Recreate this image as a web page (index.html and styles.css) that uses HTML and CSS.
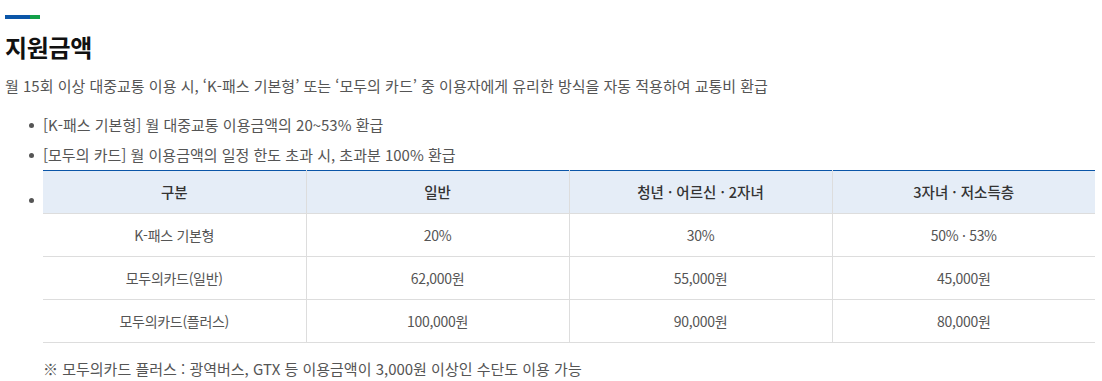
FILE: index.html
```html
<!DOCTYPE html>
<html lang="ko">
<head>
<meta charset="utf-8">
<title>지원금액</title>
<link rel="stylesheet" href="styles.css">
</head>
<body>
<section class="wrap">
  <div class="bar"></div>
  <h2 class="title">지원금액</h2>
  <p class="desc">월 15회 이상 대중교통 이용 시, ‘K-패스 기본형’ 또는 ‘모두의 카드’ 중 이용자에게 유리한 방식을 자동 적용하여 교통비 환급</p>
  <ul class="list">
    <li>[K-패스 기본형] 월 대중교통 이용금액의 20~53% 환급</li>
    <li>[모두의 카드] 월 이용금액의 일정 한도 초과 시, 초과분 100% 환급</li>
    <li class="table-item">
      <table class="tbl">
        <thead>
          <tr><th>구분</th><th>일반</th><th>청년 · 어르신 · 2자녀</th><th>3자녀 · 저소득층</th></tr>
        </thead>
        <tbody>
          <tr><td>K-패스 기본형</td><td>20%</td><td>30%</td><td>50% · 53%</td></tr>
          <tr><td>모두의카드(일반)</td><td>62,000원</td><td>55,000원</td><td>45,000원</td></tr>
          <tr><td>모두의카드(플러스)</td><td>100,000원</td><td>90,000원</td><td>80,000원</td></tr>
        </tbody>
      </table>
    </li>
  </ul>
  <p class="note">※ 모두의카드 플러스 : 광역버스, GTX 등 이용금액이 3,000원 이상인 수단도 이용 가능</p>
</section>
</body>
</html>
```
FILE: styles.css
```css
html, body {
  margin: 0;
  padding: 0;
  background: #fff;
}
body {
  font-family: "Noto Sans CJK KR", "Noto Sans", sans-serif;
  color: #555;
}
.wrap {
  padding: 15px 0 0 5px;
}
.bar {
  width: 35px;
  height: 4px;
  background: linear-gradient(to right, #0b56a8 0, #0b56a8 25px, #13a049 25px, #13a049 35px);
}
.title {
  margin: 13px 0 0;
  font-size: 24px;
  line-height: 30px;
  font-weight: 700;
  color: #111;
  letter-spacing: -0.3px;
}
.desc {
  margin: 12px 0 0;
  font-size: 15px;
  line-height: 24px;
}
.list {
  margin: 12px 0 0;
  padding: 0 0 0 38px;
  list-style: none;
  font-size: 15px;
  line-height: 30px;
}
.list li {
  position: relative;
}
.list li::before {
  content: "";
  position: absolute;
  left: -14px;
  top: 13px;
  width: 5px;
  height: 5px;
  border-radius: 50%;
  background: #555;
}
.list li.table-item::before {
  top: 28px;
}
.tbl {
  width: 1052px;
  border-collapse: collapse;
  table-layout: fixed;
  border-top: 1px solid #0b56a8;
  font-size: 14px;
}
.tbl th, .tbl td {
  height: 42px;
  padding: 0;
  text-align: center;
  vertical-align: middle;
  border-bottom: 1px solid #ddd;
  border-left: 1px solid #ddd;
  line-height: 20px;
}
.tbl th:first-child, .tbl td:first-child {
  border-left: none;
}
.tbl th {
  background: #e5edf7;
  color: #333;
  font-weight: 500;
  font-size: 14.5px;
}
.tbl td {
  color: #555;
  letter-spacing: -0.3px;
}
.note {
  margin: 14px 0 0 38px;
  font-size: 15px;
  line-height: 24px;
}
```
